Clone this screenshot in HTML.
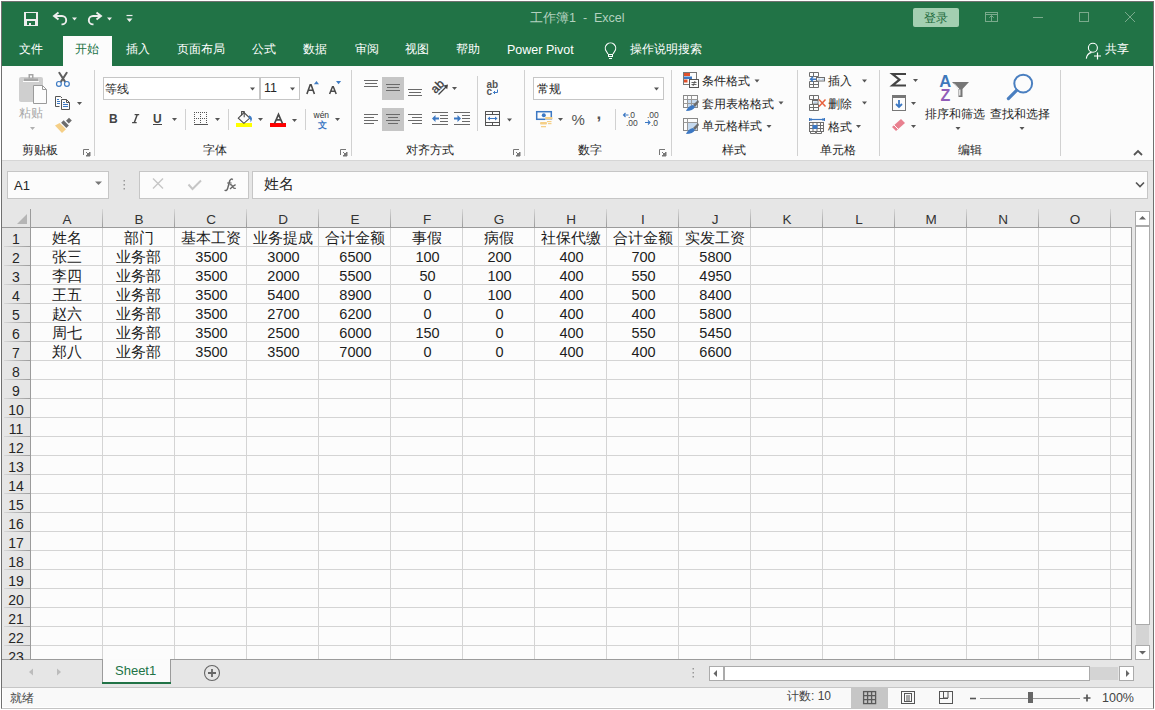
<!DOCTYPE html><html><head><meta charset="utf-8"><style>
*{margin:0;padding:0;box-sizing:border-box}
html,body{width:1155px;height:710px;overflow:hidden;background:#fff}
body{position:relative;font-family:"Liberation Sans",sans-serif}
.t{position:absolute;white-space:nowrap;line-height:1}
.a{position:absolute}
svg{position:absolute;left:0;top:0;overflow:visible}
</style></head><body><div class="a" style="left:1px;top:1px;width:1153px;height:708px;border:1px solid #707070;border-bottom-color:#c4c4c4"></div><div class="a" style="left:2px;top:2px;width:1151px;height:64px;background:#217346"></div><div class="a" style="left:63px;top:36px;width:49px;height:30px;background:#fcfcfc"></div><div class="a" style="left:2px;top:66px;width:1151px;height:94px;background:#fcfcfc"></div><div class="a" style="left:2px;top:160px;width:1151px;height:1px;background:#d6d6d6"></div><div class="a" style="left:2px;top:161px;width:1151px;height:499px;background:#e6e6e6"></div><div class="t" style="left:530px;top:12px;font-size:12.5px;color:#b3d1bf;">工作簿1&nbsp;&nbsp;-&nbsp;&nbsp;Excel</div><div class="t" style="left:19px;top:43px;font-size:12px;color:#ffffff;">文件</div><div class="t" style="left:75px;top:43px;font-size:12px;color:#217346;">开始</div><div class="t" style="left:126px;top:43px;font-size:12px;color:#ffffff;">插入</div><div class="t" style="left:177px;top:43px;font-size:12px;color:#ffffff;">页面布局</div><div class="t" style="left:252px;top:43px;font-size:12px;color:#ffffff;">公式</div><div class="t" style="left:303px;top:43px;font-size:12px;color:#ffffff;">数据</div><div class="t" style="left:355px;top:43px;font-size:12px;color:#ffffff;">审阅</div><div class="t" style="left:405px;top:43px;font-size:12px;color:#ffffff;">视图</div><div class="t" style="left:456px;top:43px;font-size:12px;color:#ffffff;">帮助</div><div class="t" style="left:507px;top:44px;font-size:12.5px;color:#ffffff;">Power Pivot</div><div class="t" style="left:630px;top:43px;font-size:12px;color:#ffffff;">操作说明搜索</div><div class="t" style="left:1105px;top:43px;font-size:12px;color:#ffffff;">共享</div><div class="a" style="left:913px;top:8px;width:46px;height:19px;background:#a3cfb1;border-radius:2px"></div><div class="t" style="left:924px;top:12px;font-size:12px;color:#1d6a3c;">登录</div><div class="a" style="left:94px;top:70px;width:1px;height:86px;background:#d1d1d1"></div><div class="a" style="left:351px;top:70px;width:1px;height:86px;background:#d1d1d1"></div><div class="a" style="left:524px;top:70px;width:1px;height:86px;background:#d1d1d1"></div><div class="a" style="left:671px;top:70px;width:1px;height:86px;background:#d1d1d1"></div><div class="a" style="left:797px;top:70px;width:1px;height:86px;background:#d1d1d1"></div><div class="a" style="left:879px;top:70px;width:1px;height:86px;background:#d1d1d1"></div><div class="a" style="left:1060px;top:70px;width:1px;height:86px;background:#d1d1d1"></div><div class="a" style="left:185px;top:109px;width:1px;height:21px;background:#d1d1d1"></div><div class="a" style="left:228px;top:109px;width:1px;height:21px;background:#d1d1d1"></div><div class="a" style="left:305px;top:109px;width:1px;height:21px;background:#d1d1d1"></div><div class="a" style="left:477px;top:76px;width:1px;height:55px;background:#d1d1d1"></div><div class="a" style="left:615px;top:109px;width:1px;height:21px;background:#d1d1d1"></div><div class="t" style="left:22px;top:144px;font-size:12px;color:#262626;">剪贴板</div><div class="t" style="left:203px;top:144px;font-size:12px;color:#262626;">字体</div><div class="t" style="left:406px;top:144px;font-size:12px;color:#262626;">对齐方式</div><div class="t" style="left:578px;top:144px;font-size:12px;color:#262626;">数字</div><div class="t" style="left:722px;top:144px;font-size:12px;color:#262626;">样式</div><div class="t" style="left:820px;top:144px;font-size:12px;color:#262626;">单元格</div><div class="t" style="left:958px;top:144px;font-size:12px;color:#262626;">编辑</div><div class="a" style="left:103px;top:77px;width:157px;height:23px;background:#fff;border:1px solid #c6c6c6"></div><div class="a" style="left:260px;top:77px;width:40px;height:23px;background:#fff;border:1px solid #c6c6c6"></div><div class="t" style="left:105px;top:83px;font-size:12px;color:#262626;">等线</div><div class="t" style="left:264px;top:82px;font-size:12.5px;color:#262626;">11</div><div class="a" style="left:533px;top:77px;width:131px;height:23px;background:#fff;border:1px solid #c6c6c6"></div><div class="t" style="left:537px;top:83px;font-size:12px;color:#262626;">常规</div><div class="a" style="left:382px;top:77px;width:22px;height:23px;background:#c6c6c6"></div><div class="a" style="left:382px;top:108px;width:22px;height:23px;background:#c6c6c6"></div><div class="t" style="left:702px;top:75px;font-size:12px;color:#262626;">条件格式</div><div class="t" style="left:702px;top:98px;font-size:12px;color:#262626;">套用表格格式</div><div class="t" style="left:702px;top:120px;font-size:12px;color:#262626;">单元格样式</div><div class="t" style="left:828px;top:75px;font-size:12px;color:#262626;">插入</div><div class="t" style="left:828px;top:98px;font-size:12px;color:#262626;">删除</div><div class="t" style="left:828px;top:121px;font-size:12px;color:#262626;">格式</div><div class="t" style="left:925px;top:108px;font-size:12px;color:#262626;">排序和筛选</div><div class="t" style="left:990px;top:108px;font-size:12px;color:#262626;">查找和选择</div><div class="t" style="left:19px;top:107px;font-size:12px;color:#a6a6a6;">粘贴</div><div class="a" style="left:7px;top:171px;width:102px;height:28px;background:#fcfcfc;border:1px solid #c6c6c6"></div><div class="t" style="left:14px;top:179px;font-size:13px;color:#262626;">A1</div><div class="a" style="left:139px;top:171px;width:110px;height:28px;background:#fcfcfc;border:1px solid #c6c6c6"></div><div class="a" style="left:252px;top:171px;width:896px;height:28px;background:#fcfcfc;border:1px solid #c6c6c6"></div><div class="t" style="left:264px;top:176px;font-size:15px;color:#262626;">姓名</div><div class="a" style="left:31px;top:228px;width:1100px;height:431px;background:#fcfcfc"></div><div class="a" style="left:102px;top:228px;width:1px;height:431px;background:#d4d4d4"></div><div class="a" style="left:102px;top:209px;width:1px;height:18px;background:linear-gradient(#d8d8d8,#bdbdbd 40%,#9d9d9d)"></div><div class="a" style="left:174px;top:228px;width:1px;height:431px;background:#d4d4d4"></div><div class="a" style="left:174px;top:209px;width:1px;height:18px;background:linear-gradient(#d8d8d8,#bdbdbd 40%,#9d9d9d)"></div><div class="a" style="left:246px;top:228px;width:1px;height:431px;background:#d4d4d4"></div><div class="a" style="left:246px;top:209px;width:1px;height:18px;background:linear-gradient(#d8d8d8,#bdbdbd 40%,#9d9d9d)"></div><div class="a" style="left:318px;top:228px;width:1px;height:431px;background:#d4d4d4"></div><div class="a" style="left:318px;top:209px;width:1px;height:18px;background:linear-gradient(#d8d8d8,#bdbdbd 40%,#9d9d9d)"></div><div class="a" style="left:390px;top:228px;width:1px;height:431px;background:#d4d4d4"></div><div class="a" style="left:390px;top:209px;width:1px;height:18px;background:linear-gradient(#d8d8d8,#bdbdbd 40%,#9d9d9d)"></div><div class="a" style="left:462px;top:228px;width:1px;height:431px;background:#d4d4d4"></div><div class="a" style="left:462px;top:209px;width:1px;height:18px;background:linear-gradient(#d8d8d8,#bdbdbd 40%,#9d9d9d)"></div><div class="a" style="left:534px;top:228px;width:1px;height:431px;background:#d4d4d4"></div><div class="a" style="left:534px;top:209px;width:1px;height:18px;background:linear-gradient(#d8d8d8,#bdbdbd 40%,#9d9d9d)"></div><div class="a" style="left:606px;top:228px;width:1px;height:431px;background:#d4d4d4"></div><div class="a" style="left:606px;top:209px;width:1px;height:18px;background:linear-gradient(#d8d8d8,#bdbdbd 40%,#9d9d9d)"></div><div class="a" style="left:678px;top:228px;width:1px;height:431px;background:#d4d4d4"></div><div class="a" style="left:678px;top:209px;width:1px;height:18px;background:linear-gradient(#d8d8d8,#bdbdbd 40%,#9d9d9d)"></div><div class="a" style="left:750px;top:228px;width:1px;height:431px;background:#d4d4d4"></div><div class="a" style="left:750px;top:209px;width:1px;height:18px;background:linear-gradient(#d8d8d8,#bdbdbd 40%,#9d9d9d)"></div><div class="a" style="left:822px;top:228px;width:1px;height:431px;background:#d4d4d4"></div><div class="a" style="left:822px;top:209px;width:1px;height:18px;background:linear-gradient(#d8d8d8,#bdbdbd 40%,#9d9d9d)"></div><div class="a" style="left:894px;top:228px;width:1px;height:431px;background:#d4d4d4"></div><div class="a" style="left:894px;top:209px;width:1px;height:18px;background:linear-gradient(#d8d8d8,#bdbdbd 40%,#9d9d9d)"></div><div class="a" style="left:966px;top:228px;width:1px;height:431px;background:#d4d4d4"></div><div class="a" style="left:966px;top:209px;width:1px;height:18px;background:linear-gradient(#d8d8d8,#bdbdbd 40%,#9d9d9d)"></div><div class="a" style="left:1038px;top:228px;width:1px;height:431px;background:#d4d4d4"></div><div class="a" style="left:1038px;top:209px;width:1px;height:18px;background:linear-gradient(#d8d8d8,#bdbdbd 40%,#9d9d9d)"></div><div class="a" style="left:1110px;top:228px;width:1px;height:431px;background:#d4d4d4"></div><div class="a" style="left:1110px;top:209px;width:1px;height:18px;background:linear-gradient(#d8d8d8,#bdbdbd 40%,#9d9d9d)"></div><div class="a" style="left:31px;top:246px;width:1100px;height:1px;background:#d4d4d4"></div><div class="a" style="left:4px;top:246px;width:26px;height:1px;background:linear-gradient(90deg,#d8d8d8,#bdbdbd 40%,#9d9d9d)"></div><div class="a" style="left:31px;top:265px;width:1100px;height:1px;background:#d4d4d4"></div><div class="a" style="left:4px;top:265px;width:26px;height:1px;background:linear-gradient(90deg,#d8d8d8,#bdbdbd 40%,#9d9d9d)"></div><div class="a" style="left:31px;top:284px;width:1100px;height:1px;background:#d4d4d4"></div><div class="a" style="left:4px;top:284px;width:26px;height:1px;background:linear-gradient(90deg,#d8d8d8,#bdbdbd 40%,#9d9d9d)"></div><div class="a" style="left:31px;top:303px;width:1100px;height:1px;background:#d4d4d4"></div><div class="a" style="left:4px;top:303px;width:26px;height:1px;background:linear-gradient(90deg,#d8d8d8,#bdbdbd 40%,#9d9d9d)"></div><div class="a" style="left:31px;top:322px;width:1100px;height:1px;background:#d4d4d4"></div><div class="a" style="left:4px;top:322px;width:26px;height:1px;background:linear-gradient(90deg,#d8d8d8,#bdbdbd 40%,#9d9d9d)"></div><div class="a" style="left:31px;top:341px;width:1100px;height:1px;background:#d4d4d4"></div><div class="a" style="left:4px;top:341px;width:26px;height:1px;background:linear-gradient(90deg,#d8d8d8,#bdbdbd 40%,#9d9d9d)"></div><div class="a" style="left:31px;top:360px;width:1100px;height:1px;background:#d4d4d4"></div><div class="a" style="left:4px;top:360px;width:26px;height:1px;background:linear-gradient(90deg,#d8d8d8,#bdbdbd 40%,#9d9d9d)"></div><div class="a" style="left:31px;top:379px;width:1100px;height:1px;background:#d4d4d4"></div><div class="a" style="left:4px;top:379px;width:26px;height:1px;background:linear-gradient(90deg,#d8d8d8,#bdbdbd 40%,#9d9d9d)"></div><div class="a" style="left:31px;top:398px;width:1100px;height:1px;background:#d4d4d4"></div><div class="a" style="left:4px;top:398px;width:26px;height:1px;background:linear-gradient(90deg,#d8d8d8,#bdbdbd 40%,#9d9d9d)"></div><div class="a" style="left:31px;top:417px;width:1100px;height:1px;background:#d4d4d4"></div><div class="a" style="left:4px;top:417px;width:26px;height:1px;background:linear-gradient(90deg,#d8d8d8,#bdbdbd 40%,#9d9d9d)"></div><div class="a" style="left:31px;top:436px;width:1100px;height:1px;background:#d4d4d4"></div><div class="a" style="left:4px;top:436px;width:26px;height:1px;background:linear-gradient(90deg,#d8d8d8,#bdbdbd 40%,#9d9d9d)"></div><div class="a" style="left:31px;top:455px;width:1100px;height:1px;background:#d4d4d4"></div><div class="a" style="left:4px;top:455px;width:26px;height:1px;background:linear-gradient(90deg,#d8d8d8,#bdbdbd 40%,#9d9d9d)"></div><div class="a" style="left:31px;top:474px;width:1100px;height:1px;background:#d4d4d4"></div><div class="a" style="left:4px;top:474px;width:26px;height:1px;background:linear-gradient(90deg,#d8d8d8,#bdbdbd 40%,#9d9d9d)"></div><div class="a" style="left:31px;top:493px;width:1100px;height:1px;background:#d4d4d4"></div><div class="a" style="left:4px;top:493px;width:26px;height:1px;background:linear-gradient(90deg,#d8d8d8,#bdbdbd 40%,#9d9d9d)"></div><div class="a" style="left:31px;top:512px;width:1100px;height:1px;background:#d4d4d4"></div><div class="a" style="left:4px;top:512px;width:26px;height:1px;background:linear-gradient(90deg,#d8d8d8,#bdbdbd 40%,#9d9d9d)"></div><div class="a" style="left:31px;top:531px;width:1100px;height:1px;background:#d4d4d4"></div><div class="a" style="left:4px;top:531px;width:26px;height:1px;background:linear-gradient(90deg,#d8d8d8,#bdbdbd 40%,#9d9d9d)"></div><div class="a" style="left:31px;top:550px;width:1100px;height:1px;background:#d4d4d4"></div><div class="a" style="left:4px;top:550px;width:26px;height:1px;background:linear-gradient(90deg,#d8d8d8,#bdbdbd 40%,#9d9d9d)"></div><div class="a" style="left:31px;top:569px;width:1100px;height:1px;background:#d4d4d4"></div><div class="a" style="left:4px;top:569px;width:26px;height:1px;background:linear-gradient(90deg,#d8d8d8,#bdbdbd 40%,#9d9d9d)"></div><div class="a" style="left:31px;top:588px;width:1100px;height:1px;background:#d4d4d4"></div><div class="a" style="left:4px;top:588px;width:26px;height:1px;background:linear-gradient(90deg,#d8d8d8,#bdbdbd 40%,#9d9d9d)"></div><div class="a" style="left:31px;top:607px;width:1100px;height:1px;background:#d4d4d4"></div><div class="a" style="left:4px;top:607px;width:26px;height:1px;background:linear-gradient(90deg,#d8d8d8,#bdbdbd 40%,#9d9d9d)"></div><div class="a" style="left:31px;top:626px;width:1100px;height:1px;background:#d4d4d4"></div><div class="a" style="left:4px;top:626px;width:26px;height:1px;background:linear-gradient(90deg,#d8d8d8,#bdbdbd 40%,#9d9d9d)"></div><div class="a" style="left:31px;top:645px;width:1100px;height:1px;background:#d4d4d4"></div><div class="a" style="left:4px;top:645px;width:26px;height:1px;background:linear-gradient(90deg,#d8d8d8,#bdbdbd 40%,#9d9d9d)"></div><div class="a" style="left:2px;top:227px;width:1130px;height:1px;background:#9b9b9b"></div><div class="a" style="left:30px;top:209px;width:1px;height:451px;background:#9b9b9b"></div><div class="a" style="left:1131px;top:227px;width:1px;height:433px;background:#9b9b9b"></div><div class="a" style="left:2px;top:659px;width:1130px;height:1px;background:#9b9b9b"></div><div class="t" style="left:31px;top:212.5px;width:72px;text-align:center;font-size:13.5px;color:#333">A</div><div class="t" style="left:103px;top:212.5px;width:72px;text-align:center;font-size:13.5px;color:#333">B</div><div class="t" style="left:175px;top:212.5px;width:72px;text-align:center;font-size:13.5px;color:#333">C</div><div class="t" style="left:247px;top:212.5px;width:72px;text-align:center;font-size:13.5px;color:#333">D</div><div class="t" style="left:319px;top:212.5px;width:72px;text-align:center;font-size:13.5px;color:#333">E</div><div class="t" style="left:391px;top:212.5px;width:72px;text-align:center;font-size:13.5px;color:#333">F</div><div class="t" style="left:463px;top:212.5px;width:72px;text-align:center;font-size:13.5px;color:#333">G</div><div class="t" style="left:535px;top:212.5px;width:72px;text-align:center;font-size:13.5px;color:#333">H</div><div class="t" style="left:607px;top:212.5px;width:72px;text-align:center;font-size:13.5px;color:#333">I</div><div class="t" style="left:679px;top:212.5px;width:72px;text-align:center;font-size:13.5px;color:#333">J</div><div class="t" style="left:751px;top:212.5px;width:72px;text-align:center;font-size:13.5px;color:#333">K</div><div class="t" style="left:823px;top:212.5px;width:72px;text-align:center;font-size:13.5px;color:#333">L</div><div class="t" style="left:895px;top:212.5px;width:72px;text-align:center;font-size:13.5px;color:#333">M</div><div class="t" style="left:967px;top:212.5px;width:72px;text-align:center;font-size:13.5px;color:#333">N</div><div class="t" style="left:1039px;top:212.5px;width:72px;text-align:center;font-size:13.5px;color:#333">O</div><div class="t" style="left:2px;top:232px;width:28px;text-align:center;font-size:14px;color:#262626">1</div><div class="t" style="left:2px;top:251px;width:28px;text-align:center;font-size:14px;color:#262626">2</div><div class="t" style="left:2px;top:270px;width:28px;text-align:center;font-size:14px;color:#262626">3</div><div class="t" style="left:2px;top:289px;width:28px;text-align:center;font-size:14px;color:#262626">4</div><div class="t" style="left:2px;top:308px;width:28px;text-align:center;font-size:14px;color:#262626">5</div><div class="t" style="left:2px;top:327px;width:28px;text-align:center;font-size:14px;color:#262626">6</div><div class="t" style="left:2px;top:346px;width:28px;text-align:center;font-size:14px;color:#262626">7</div><div class="t" style="left:2px;top:365px;width:28px;text-align:center;font-size:14px;color:#262626">8</div><div class="t" style="left:2px;top:384px;width:28px;text-align:center;font-size:14px;color:#262626">9</div><div class="t" style="left:2px;top:403px;width:28px;text-align:center;font-size:14px;color:#262626">10</div><div class="t" style="left:2px;top:422px;width:28px;text-align:center;font-size:14px;color:#262626">11</div><div class="t" style="left:2px;top:441px;width:28px;text-align:center;font-size:14px;color:#262626">12</div><div class="t" style="left:2px;top:460px;width:28px;text-align:center;font-size:14px;color:#262626">13</div><div class="t" style="left:2px;top:479px;width:28px;text-align:center;font-size:14px;color:#262626">14</div><div class="t" style="left:2px;top:498px;width:28px;text-align:center;font-size:14px;color:#262626">15</div><div class="t" style="left:2px;top:517px;width:28px;text-align:center;font-size:14px;color:#262626">16</div><div class="t" style="left:2px;top:536px;width:28px;text-align:center;font-size:14px;color:#262626">17</div><div class="t" style="left:2px;top:555px;width:28px;text-align:center;font-size:14px;color:#262626">18</div><div class="t" style="left:2px;top:574px;width:28px;text-align:center;font-size:14px;color:#262626">19</div><div class="t" style="left:2px;top:593px;width:28px;text-align:center;font-size:14px;color:#262626">20</div><div class="t" style="left:2px;top:612px;width:28px;text-align:center;font-size:14px;color:#262626">21</div><div class="t" style="left:2px;top:631px;width:28px;text-align:center;font-size:14px;color:#262626">22</div><div class="t" style="left:2px;top:650px;width:28px;text-align:center;font-size:14px;color:#262626">23</div><div class="t" style="left:31px;top:231px;width:71px;text-align:center;font-size:14.5px;color:#1c1c1c">姓名</div><div class="t" style="left:103px;top:231px;width:71px;text-align:center;font-size:14.5px;color:#1c1c1c">部门</div><div class="t" style="left:175px;top:231px;width:71px;text-align:center;font-size:14.5px;color:#1c1c1c">基本工资</div><div class="t" style="left:247px;top:231px;width:71px;text-align:center;font-size:14.5px;color:#1c1c1c">业务提成</div><div class="t" style="left:319px;top:231px;width:71px;text-align:center;font-size:14.5px;color:#1c1c1c">合计金额</div><div class="t" style="left:391px;top:231px;width:71px;text-align:center;font-size:14.5px;color:#1c1c1c">事假</div><div class="t" style="left:463px;top:231px;width:71px;text-align:center;font-size:14.5px;color:#1c1c1c">病假</div><div class="t" style="left:535px;top:231px;width:71px;text-align:center;font-size:14.5px;color:#1c1c1c">社保代缴</div><div class="t" style="left:607px;top:231px;width:71px;text-align:center;font-size:14.5px;color:#1c1c1c">合计金额</div><div class="t" style="left:679px;top:231px;width:71px;text-align:center;font-size:14.5px;color:#1c1c1c">实发工资</div><div class="t" style="left:31px;top:250px;width:71px;text-align:center;font-size:14.5px;color:#1c1c1c">张三</div><div class="t" style="left:103px;top:250px;width:71px;text-align:center;font-size:14.5px;color:#1c1c1c">业务部</div><div class="t" style="left:176px;top:250px;width:71px;text-align:center;font-size:14.5px;color:#1c1c1c">3500</div><div class="t" style="left:248px;top:250px;width:71px;text-align:center;font-size:14.5px;color:#1c1c1c">3000</div><div class="t" style="left:320px;top:250px;width:71px;text-align:center;font-size:14.5px;color:#1c1c1c">6500</div><div class="t" style="left:392px;top:250px;width:71px;text-align:center;font-size:14.5px;color:#1c1c1c">100</div><div class="t" style="left:464px;top:250px;width:71px;text-align:center;font-size:14.5px;color:#1c1c1c">200</div><div class="t" style="left:536px;top:250px;width:71px;text-align:center;font-size:14.5px;color:#1c1c1c">400</div><div class="t" style="left:608px;top:250px;width:71px;text-align:center;font-size:14.5px;color:#1c1c1c">700</div><div class="t" style="left:680px;top:250px;width:71px;text-align:center;font-size:14.5px;color:#1c1c1c">5800</div><div class="t" style="left:31px;top:269px;width:71px;text-align:center;font-size:14.5px;color:#1c1c1c">李四</div><div class="t" style="left:103px;top:269px;width:71px;text-align:center;font-size:14.5px;color:#1c1c1c">业务部</div><div class="t" style="left:176px;top:269px;width:71px;text-align:center;font-size:14.5px;color:#1c1c1c">3500</div><div class="t" style="left:248px;top:269px;width:71px;text-align:center;font-size:14.5px;color:#1c1c1c">2000</div><div class="t" style="left:320px;top:269px;width:71px;text-align:center;font-size:14.5px;color:#1c1c1c">5500</div><div class="t" style="left:392px;top:269px;width:71px;text-align:center;font-size:14.5px;color:#1c1c1c">50</div><div class="t" style="left:464px;top:269px;width:71px;text-align:center;font-size:14.5px;color:#1c1c1c">100</div><div class="t" style="left:536px;top:269px;width:71px;text-align:center;font-size:14.5px;color:#1c1c1c">400</div><div class="t" style="left:608px;top:269px;width:71px;text-align:center;font-size:14.5px;color:#1c1c1c">550</div><div class="t" style="left:680px;top:269px;width:71px;text-align:center;font-size:14.5px;color:#1c1c1c">4950</div><div class="t" style="left:31px;top:288px;width:71px;text-align:center;font-size:14.5px;color:#1c1c1c">王五</div><div class="t" style="left:103px;top:288px;width:71px;text-align:center;font-size:14.5px;color:#1c1c1c">业务部</div><div class="t" style="left:176px;top:288px;width:71px;text-align:center;font-size:14.5px;color:#1c1c1c">3500</div><div class="t" style="left:248px;top:288px;width:71px;text-align:center;font-size:14.5px;color:#1c1c1c">5400</div><div class="t" style="left:320px;top:288px;width:71px;text-align:center;font-size:14.5px;color:#1c1c1c">8900</div><div class="t" style="left:392px;top:288px;width:71px;text-align:center;font-size:14.5px;color:#1c1c1c">0</div><div class="t" style="left:464px;top:288px;width:71px;text-align:center;font-size:14.5px;color:#1c1c1c">100</div><div class="t" style="left:536px;top:288px;width:71px;text-align:center;font-size:14.5px;color:#1c1c1c">400</div><div class="t" style="left:608px;top:288px;width:71px;text-align:center;font-size:14.5px;color:#1c1c1c">500</div><div class="t" style="left:680px;top:288px;width:71px;text-align:center;font-size:14.5px;color:#1c1c1c">8400</div><div class="t" style="left:31px;top:307px;width:71px;text-align:center;font-size:14.5px;color:#1c1c1c">赵六</div><div class="t" style="left:103px;top:307px;width:71px;text-align:center;font-size:14.5px;color:#1c1c1c">业务部</div><div class="t" style="left:176px;top:307px;width:71px;text-align:center;font-size:14.5px;color:#1c1c1c">3500</div><div class="t" style="left:248px;top:307px;width:71px;text-align:center;font-size:14.5px;color:#1c1c1c">2700</div><div class="t" style="left:320px;top:307px;width:71px;text-align:center;font-size:14.5px;color:#1c1c1c">6200</div><div class="t" style="left:392px;top:307px;width:71px;text-align:center;font-size:14.5px;color:#1c1c1c">0</div><div class="t" style="left:464px;top:307px;width:71px;text-align:center;font-size:14.5px;color:#1c1c1c">0</div><div class="t" style="left:536px;top:307px;width:71px;text-align:center;font-size:14.5px;color:#1c1c1c">400</div><div class="t" style="left:608px;top:307px;width:71px;text-align:center;font-size:14.5px;color:#1c1c1c">400</div><div class="t" style="left:680px;top:307px;width:71px;text-align:center;font-size:14.5px;color:#1c1c1c">5800</div><div class="t" style="left:31px;top:326px;width:71px;text-align:center;font-size:14.5px;color:#1c1c1c">周七</div><div class="t" style="left:103px;top:326px;width:71px;text-align:center;font-size:14.5px;color:#1c1c1c">业务部</div><div class="t" style="left:176px;top:326px;width:71px;text-align:center;font-size:14.5px;color:#1c1c1c">3500</div><div class="t" style="left:248px;top:326px;width:71px;text-align:center;font-size:14.5px;color:#1c1c1c">2500</div><div class="t" style="left:320px;top:326px;width:71px;text-align:center;font-size:14.5px;color:#1c1c1c">6000</div><div class="t" style="left:392px;top:326px;width:71px;text-align:center;font-size:14.5px;color:#1c1c1c">150</div><div class="t" style="left:464px;top:326px;width:71px;text-align:center;font-size:14.5px;color:#1c1c1c">0</div><div class="t" style="left:536px;top:326px;width:71px;text-align:center;font-size:14.5px;color:#1c1c1c">400</div><div class="t" style="left:608px;top:326px;width:71px;text-align:center;font-size:14.5px;color:#1c1c1c">550</div><div class="t" style="left:680px;top:326px;width:71px;text-align:center;font-size:14.5px;color:#1c1c1c">5450</div><div class="t" style="left:31px;top:345px;width:71px;text-align:center;font-size:14.5px;color:#1c1c1c">郑八</div><div class="t" style="left:103px;top:345px;width:71px;text-align:center;font-size:14.5px;color:#1c1c1c">业务部</div><div class="t" style="left:176px;top:345px;width:71px;text-align:center;font-size:14.5px;color:#1c1c1c">3500</div><div class="t" style="left:248px;top:345px;width:71px;text-align:center;font-size:14.5px;color:#1c1c1c">3500</div><div class="t" style="left:320px;top:345px;width:71px;text-align:center;font-size:14.5px;color:#1c1c1c">7000</div><div class="t" style="left:392px;top:345px;width:71px;text-align:center;font-size:14.5px;color:#1c1c1c">0</div><div class="t" style="left:464px;top:345px;width:71px;text-align:center;font-size:14.5px;color:#1c1c1c">0</div><div class="t" style="left:536px;top:345px;width:71px;text-align:center;font-size:14.5px;color:#1c1c1c">400</div><div class="t" style="left:608px;top:345px;width:71px;text-align:center;font-size:14.5px;color:#1c1c1c">400</div><div class="t" style="left:680px;top:345px;width:71px;text-align:center;font-size:14.5px;color:#1c1c1c">6600</div><div class="a" style="left:1135px;top:211px;width:15px;height:15px;background:#fff;border:1px solid #ababab"></div><div class="a" style="left:1135px;top:226px;width:15px;height:399px;background:#fff;border:1px solid #ababab"></div><div class="a" style="left:1136px;top:625px;width:13px;height:20px;background:#d4d4d4"></div><div class="a" style="left:1135px;top:645px;width:15px;height:15px;background:#fff;border:1px solid #ababab"></div><div class="a" style="left:2px;top:660px;width:1151px;height:27px;background:#e6e6e6"></div><div class="a" style="left:102px;top:659px;width:69px;height:25px;background:#fbfbfb;border:1px solid #9b9b9b;border-top:none"></div><div class="a" style="left:103px;top:659px;width:67px;height:1px;background:#fbfbfb"></div><div class="a" style="left:102px;top:682px;width:69px;height:2px;background:#217346"></div><div class="t" style="left:115px;top:664px;font-size:13px;color:#217346;">Sheet1</div><div class="a" style="left:709px;top:666px;width:15px;height:15px;background:#fff;border:1px solid #ababab"></div><div class="a" style="left:724px;top:666px;width:366px;height:15px;background:#fff;border:1px solid #ababab"></div><div class="a" style="left:1090px;top:667px;width:28px;height:13px;background:#d4d4d4"></div><div class="a" style="left:1119px;top:666px;width:15px;height:15px;background:#fff;border:1px solid #ababab"></div><div class="a" style="left:2px;top:687px;width:1151px;height:1px;background:#c6c6c6"></div><div class="a" style="left:2px;top:688px;width:1151px;height:20px;background:#fff"></div><div class="a" style="left:3px;top:688px;width:1150px;height:19px;background:#f9f9f9"></div><div class="a" style="left:851px;top:688px;width:37px;height:20px;background:#c6c6c6"></div><div class="t" style="left:10px;top:691.5px;font-size:12px;color:#444;">就绪</div><div class="t" style="left:787px;top:690px;font-size:12px;color:#444;">计数: 10</div><div class="t" style="left:1102px;top:692px;font-size:12.5px;color:#444;">100%</div><div class="a" style="left:236px;top:123px;width:16px;height:4px;background:#ffff00"></div><div class="a" style="left:270px;top:123px;width:16px;height:4px;background:#ff0000"></div><svg width="1155" height="710"><path d="M24 12h14v14h-14zM26 13v6h10v-6zM27 21v4h2v-2h2v2h4v-4z" fill="#eeeeee" fill-rule="evenodd"/><path d="M58.5 12.5L54 16l4.5 3.5M55 16h7A4.2 4.2 0 0 1 62 24.4h-0.5" fill="none" stroke="#eeeeee" stroke-width="1.9"/><path d="M72 17.5h5l-2.5 3.0z" fill="#eeeeee"/><path d="M96.5 12.5L101 16l-4.5 3.5M100 16h-7A4.2 4.2 0 0 0 93 24.4h0.5" fill="none" stroke="#eeeeee" stroke-width="1.9"/><path d="M107 17.5h5l-2.5 3.0z" fill="#eeeeee"/><path d="M126.5 15.5h6" stroke="#eeeeee" stroke-width="1.2"/><path d="M126.5 18.5h6l-3.0 3.5999999999999996z" fill="#eeeeee"/><rect x="985.5" y="12.5" width="12" height="9" fill="none" stroke="#7aaa8c"/><path d="M985.5 14.5h12M991.5 21.5v-6M989.3 17.7l2.2-2.2 2.2 2.2" stroke="#7aaa8c" fill="none"/><path d="M1033 17.5h10" stroke="#7aaa8c"/><rect x="1079.5" y="12.5" width="9" height="9" fill="none" stroke="#7aaa8c"/><path d="M1125 12l10 10M1135 12l-10 10" stroke="#7aaa8c"/><path d="M608 54 L606.3 51.2 A5.2 5.2 0 1 1 614.7 51.2 L613 54" fill="none" stroke="#fff" stroke-width="1.1"/><rect x="608.5" y="54.5" width="4" height="2" fill="none" stroke="#fff"/><path d="M609 58.5h3" stroke="#fff"/><circle cx="1092.9" cy="47.8" r="4.5" fill="none" stroke="#fff" stroke-width="1.1"/><path d="M1086.3 58.6 Q1087 53.5 1091.6 52.4" fill="none" stroke="#fff" stroke-width="1.1"/><path d="M1097.5 52.5v7M1094 56h7" stroke="#fff" stroke-width="1.2"/><rect x="19" y="77" width="24" height="25" rx="2" fill="#cfcfcf"/><path d="M24 78.5h14v2.5h-14z" fill="#a6a6a6"/><path d="M28.5 74h5v4.5h-5z" fill="#a6a6a6"/><path d="M30 75.5h2v2h-2z" fill="#fcfcfc"/><path d="M23 81.5h16" stroke="#fcfcfc"/><path d="M33.5 85.5h9l4 4v14h-13z" fill="#fcfcfc" stroke="#9a9a9a"/><path d="M42.5 85.5v4h4" fill="none" stroke="#9a9a9a"/><path d="M30 127h5l-2.5 3.0z" fill="#b0b0b0"/><path d="M59.3 72.8 L65 81.6M66.7 72.8 L61 81.6" stroke="#5e5e5e" stroke-width="2" stroke-linecap="round"/><circle cx="58.9" cy="83.9" r="2.4" fill="#fcfcfc" stroke="#3f7cc4" stroke-width="1.2"/><circle cx="66.9" cy="83.9" r="2.4" fill="#fcfcfc" stroke="#3f7cc4" stroke-width="1.2"/><path d="M59.5 106.5h-4v-10h5l1.5 1.5" fill="none" stroke="#555"/><path d="M61.5 99.5h5l3 3v7h-8z" fill="#fcfcfc" stroke="#555"/><path d="M66.5 99.5v3h3" fill="none" stroke="#555"/><path d="M57 99.5h2M57 101.5h3M57 103.5h3M63 102.5h2M63 104.5h5M63 106.5h5" stroke="#3c78c3"/><path d="M77 102h5l-2.5 3.0z" fill="#555"/><path d="M55 125.5 L59.7 123 L66 129.2 L62 133Z" fill="#f5cf87"/><path d="M61.1 122.8 L63.6 120.3 L68.9 125.6 L66.4 128.1Z" fill="#6d6d6d"/><path d="M66 120.8 L69 117.8 L71.8 120.6 L68.8 123.6Z" fill="#6d6d6d"/><path d="M83.5 155v-5.5h5.5" fill="none" stroke="#777"/><path d="M86 152l3.5 3.5M90 152v4h-4z" stroke="#777" fill="#777" stroke-width="1"/><path d="M340.5 155v-5.5h5.5" fill="none" stroke="#777"/><path d="M343 152l3.5 3.5M347 152v4h-4z" stroke="#777" fill="#777" stroke-width="1"/><path d="M513.5 155v-5.5h5.5" fill="none" stroke="#777"/><path d="M516 152l3.5 3.5M520 152v4h-4z" stroke="#777" fill="#777" stroke-width="1"/><path d="M659.5 155v-5.5h5.5" fill="none" stroke="#777"/><path d="M662 152l3.5 3.5M666 152v4h-4z" stroke="#777" fill="#777" stroke-width="1"/><path d="M250 87.5h5l-2.5 3.0z" fill="#555"/><path d="M290 87.5h5l-2.5 3.0z" fill="#555"/><path d="M654 87.5h5l-2.5 3.0z" fill="#555"/><path d="M306.9 94 L310.2 84.8h0.9 L314.4 94M308.4 90.3h4.5" fill="none" stroke="#4a4a4a" stroke-width="1.6"/><path d="M313.9 84.2l2.55-3.3 2.55 3.3z" fill="#3f7cc4"/><path d="M329.6 94 L332.5 86.7h0.8 L336.2 94M330.9 91.2h3.9" fill="none" stroke="#4a4a4a" stroke-width="1.5"/><path d="M336 80.9h5.1l-2.55 3.3z" fill="#3f7cc4"/><text x="109" y="123" font-family="Liberation Sans" font-weight="bold" font-size="12" fill="#444">B</text><path d="M134.6 114.6h4.6M132.1 122.6h4.6M137.3 114.6L134.3 122.6" fill="none" stroke="#474747" stroke-width="1.45"/><text x="153" y="123" font-family="Liberation Sans" font-weight="bold" font-size="12" fill="#444">U</text><path d="M153 124.5h9" stroke="#444"/><path d="M172 118h5l-2.5 3.0z" fill="#555"/><g fill="#555"><rect x="194" y="112" width="1" height="1"/><rect x="194" y="114" width="1" height="1"/><rect x="194" y="116" width="1" height="1"/><rect x="194" y="118" width="1" height="1"/><rect x="194" y="120" width="1" height="1"/><rect x="194" y="122" width="1" height="1"/><rect x="196" y="112" width="1" height="1"/><rect x="196" y="118" width="1" height="1"/><rect x="198" y="112" width="1" height="1"/><rect x="198" y="118" width="1" height="1"/><rect x="200" y="112" width="1" height="1"/><rect x="200" y="114" width="1" height="1"/><rect x="200" y="116" width="1" height="1"/><rect x="200" y="118" width="1" height="1"/><rect x="200" y="120" width="1" height="1"/><rect x="200" y="122" width="1" height="1"/><rect x="202" y="112" width="1" height="1"/><rect x="202" y="118" width="1" height="1"/><rect x="204" y="112" width="1" height="1"/><rect x="204" y="118" width="1" height="1"/><rect x="206" y="112" width="1" height="1"/><rect x="206" y="114" width="1" height="1"/><rect x="206" y="116" width="1" height="1"/><rect x="206" y="118" width="1" height="1"/><rect x="206" y="120" width="1" height="1"/><rect x="206" y="122" width="1" height="1"/></g><path d="M194 124.5h14" stroke="#555"/><path d="M215 118h5l-2.5 3.0z" fill="#555"/><path d="M238.3 118.2 L244 112.6 L249.8 118.1 L243.9 123.4Z" fill="none" stroke="#4a4a4a" stroke-width="1.05"/><path d="M241.6 115.6V111.6h2.6v5.6" fill="none" stroke="#4a4a4a" stroke-width="1.05"/><path d="M249.2 115.2 Q254 117.6 250.6 122.6 Q250.8 119.4 248.8 117.8Z" fill="#3f7cc4"/><path d="M258 118h5l-2.5 3.0z" fill="#555"/><path d="M274.5 123.5 L278.5 114.4 L282.5 123.5M276.2 119.8h4.6" fill="none" stroke="#4a4a4a" stroke-width="1.7"/><path d="M292 119h5l-2.5 3.0z" fill="#555"/><text x="313.5" y="118" font-family="Liberation Sans" font-size="8.5" fill="#333">wén</text><text x="317.5" y="127.5" font-family="Liberation Sans" font-weight="bold" font-size="9" fill="#3c78c3">文</text><path d="M335 118h5l-2.5 3.0z" fill="#555"/><path d="M364 80.5h14" stroke="#6a6a6a"/><path d="M365 83.5h12" stroke="#6a6a6a"/><path d="M364 86.5h14" stroke="#6a6a6a"/><path d="M386 84.5h14" stroke="#6a6a6a"/><path d="M387 87.5h12" stroke="#6a6a6a"/><path d="M386 90.5h14" stroke="#6a6a6a"/><path d="M408 89.5h14" stroke="#6a6a6a"/><path d="M409 92.5h12" stroke="#6a6a6a"/><path d="M408 95.5h14" stroke="#6a6a6a"/><path d="M364 114.5h14" stroke="#6a6a6a"/><path d="M386 114.5h14" stroke="#6a6a6a"/><path d="M408 114.5h14" stroke="#6a6a6a"/><path d="M364 117.5h10" stroke="#6a6a6a"/><path d="M388 117.5h10" stroke="#6a6a6a"/><path d="M412 117.5h10" stroke="#6a6a6a"/><path d="M364 120.5h14" stroke="#6a6a6a"/><path d="M386 120.5h14" stroke="#6a6a6a"/><path d="M408 120.5h14" stroke="#6a6a6a"/><path d="M364 123.5h10" stroke="#6a6a6a"/><path d="M388 123.5h10" stroke="#6a6a6a"/><path d="M412 123.5h10" stroke="#6a6a6a"/><text x="0" y="0" font-family="Liberation Sans" font-size="12" fill="#3a3a3a" stroke="#3a3a3a" stroke-width="0.35" transform="translate(435.5 94) rotate(-45)">ab</text><path d="M438.5 94.5 L446.5 86.5" stroke="#444" stroke-width="1.2"/><path d="M448 84.6 l-4.6 0.8 l3.8 3.8z" fill="#444"/><path d="M452 87h5l-2.5 3.0z" fill="#555"/><path d="M432 112.5h16" stroke="#6a6a6a"/><path d="M432 124.5h16" stroke="#6a6a6a"/><path d="M440 115.5h8" stroke="#6a6a6a"/><path d="M440 118.5h8" stroke="#6a6a6a"/><path d="M440 121.5h8" stroke="#6a6a6a"/><path d="M432 118.5 l3.5-3.5v2.5h3.5v2h-3.5v2.5z" fill="#3c78c3"/><path d="M454 112.5h16" stroke="#6a6a6a"/><path d="M454 124.5h16" stroke="#6a6a6a"/><path d="M462 115.5h8" stroke="#6a6a6a"/><path d="M462 118.5h8" stroke="#6a6a6a"/><path d="M462 121.5h8" stroke="#6a6a6a"/><path d="M461 118.5 l-3.5-3.5v2.5h-3.5v2h3.5v2.5z" fill="#3c78c3"/><text x="486.5" y="87.5" font-family="Liberation Sans" font-weight="bold" font-size="10" fill="#555">ab</text><text x="486.5" y="95" font-family="Liberation Sans" font-weight="bold" font-size="10" fill="#555">c</text><path d="M497.5 89.5v3h-4M495 91l-1.5 1.5 1.5 1.5" fill="none" stroke="#3c78c3"/><rect x="485.5" y="111.5" width="14" height="14" fill="none" stroke="#555"/><path d="M485.5 114.5h14M485.5 122.5h14M492.5 111.5v3M492.5 122.5v3" stroke="#555"/><path d="M488 118.5h9" stroke="#3c78c3"/><path d="M487.5 118.5l2.5-2v4zM497.5 118.5l-2.5-2v4z" fill="#3c78c3"/><path d="M507 118.5h5l-2.5 3.0z" fill="#555"/><rect x="536.7" y="111.7" width="14.6" height="7.6" fill="none" stroke="#3c78c3" stroke-width="1.5"/><circle cx="543.8" cy="115.3" r="2" fill="#3c78c3"/><g fill="#f5cf87"><rect x="545" y="117" width="7.5" height="2.6" rx="1"/><rect x="547" y="121" width="4.5" height="1.2"/><rect x="548" y="123" width="3.5" height="1.2"/><rect x="540" y="122" width="7" height="2.6" rx="1"/><rect x="541" y="126" width="5" height="1.3"/></g><rect x="545" y="119.6" width="7.5" height="1.4" fill="#fcfcfc"/><path d="M558 118h5l-2.5 3.0z" fill="#555"/><text x="571.5" y="124.5" font-family="Liberation Sans" font-size="15" fill="#555">%</text><text x="596.5" y="118.5" font-family="Liberation Sans" font-weight="bold" font-size="17" fill="#555">,</text><text x="628" y="118" font-family="Liberation Sans" font-size="8.5" fill="#444">.0</text><text x="626" y="125.5" font-family="Liberation Sans" font-size="8.5" fill="#444">.00</text><path d="M623.5 115h5M625.5 113l-2 2 2 2" fill="none" stroke="#3c78c3" stroke-width="1.1"/><text x="647" y="118" font-family="Liberation Sans" font-size="8.5" fill="#444">.00</text><text x="651" y="125.5" font-family="Liberation Sans" font-size="8.5" fill="#444">.0</text><path d="M645 122.5h5M648 120.5l2 2-2 2" fill="none" stroke="#3c78c3" stroke-width="1.1"/><rect x="683.5" y="72.5" width="13" height="12" fill="#fcfcfc" stroke="#777"/><rect x="684" y="73" width="6" height="3" fill="#e0502a"/><rect x="684" y="76.5" width="8" height="2.5" fill="#3c78c3"/><rect x="684" y="79.5" width="3.5" height="3" fill="#e0502a"/><rect x="689.5" y="79.5" width="9" height="8" fill="#fcfcfc" stroke="#555"/><path d="M691.5 82.5h5M691.5 84.5h5M695 81l-2 5" stroke="#555" stroke-width="0.9"/><rect x="683.5" y="95.5" width="14" height="12" fill="#fcfcfc" stroke="#888"/><rect x="687" y="99" width="10" height="8" fill="#c5d9ee"/><path d="M683.5 99.5h14M683.5 103.5h14M687.5 95.5v12M691.5 95.5v12" stroke="#999"/><path d="M693 105 L698 100 L699 102 L695 107z" fill="#6d6d6d"/><path d="M686 111 Q688 106 693 105 L695 107 Q693 111 686 111z" fill="#3c78c3"/><rect x="683.5" y="118.5" width="14" height="12" fill="#fcfcfc" stroke="#888"/><rect x="687" y="122" width="10" height="8" fill="#c5d9ee"/><path d="M683.5 122.5h14M687.5 118.5v12" stroke="#999"/><path d="M693 128 L698 123 L699 125 L695 130z" fill="#6d6d6d"/><path d="M686 134 Q688 129 693 128 L695 130 Q693 134 686 134z" fill="#3c78c3"/><path d="M754.5 79.5h5l-2.5 3.0z" fill="#555"/><path d="M778.5 101.5h5l-2.5 3.0z" fill="#555"/><path d="M766.5 125h5l-2.5 3.0z" fill="#555"/><g fill="none" stroke="#6e6e6e"><path d="M809.5 72.5h9v4h-9zM813.5 72.5v4"/><path d="M809.5 81.5h9v6h-9zM809.5 84.5h9M813.5 81.5v6"/><rect x="816.5" y="77.5" width="8" height="3.5"/></g><g fill="#b9cfe8"><rect x="818" y="78.5" width="2.5" height="1.6"/><rect x="821.5" y="78.5" width="2.5" height="1.6"/></g><path d="M810.5 79.2h5.5M813 76.8l-2.5 2.4 2.5 2.4" fill="none" stroke="#3c78c3" stroke-width="1.4"/><g fill="none" stroke="#6e6e6e"><path d="M809.5 95.5h9v4h-9zM813.5 95.5v4"/><path d="M809.5 104.5h9v6h-9zM809.5 107.5h9M813.5 104.5v6"/><rect x="812.5" y="100.5" width="5.5" height="3.5"/></g><rect x="813.5" y="101.5" width="3.5" height="1.6" fill="#b9cfe8"/><path d="M819 99.5l6.5 7M825.5 99.5l-6.5 7" stroke="#e8603c" stroke-width="1.5"/><path d="M810 119.5h14" stroke="#3c78c3" stroke-width="1.2"/><path d="M809.5 118v3M824.5 118v3" stroke="#3c78c3"/><path d="M811.5 118l-1.5 1.5 1.5 1.5M822.5 118l1.5 1.5-1.5 1.5" fill="none" stroke="#3c78c3"/><g fill="none" stroke="#6e6e6e"><rect x="809.5" y="122.5" width="14" height="9"/><path d="M809.5 125.5h14M809.5 128.5h14M813 122.5v9M817 122.5v9M820.5 122.5v9M810.5 131.5v2h5v-2M816.5 131.5v2h5v-2"/></g><rect x="812.5" y="125" width="5" height="4" fill="#3c78c3"/><path d="M862 79.5h5l-2.5 3.0z" fill="#555"/><path d="M862 101.5h5l-2.5 3.0z" fill="#555"/><path d="M856 125h5l-2.5 3.0z" fill="#555"/><path d="M906 74H892.5L899.5 79.7L892.5 85.5H906" fill="none" stroke="#444" stroke-width="2.2" stroke-linejoin="miter"/><path d="M913 79h5l-2.5 3.0z" fill="#555"/><rect x="892.5" y="95.5" width="13" height="15" fill="#fcfcfc" stroke="#777"/><rect x="892" y="95" width="14" height="3" fill="#777"/><path d="M899 100v7M896 104l3 3 3-3" fill="none" stroke="#3c78c3" stroke-width="1.8"/><path d="M911 102h5l-2.5 3.0z" fill="#555"/><path d="M892 127 L901 119 L905 123 L896 131z" fill="#e8808f"/><path d="M894 125 L898 129" stroke="#fcfcfc" stroke-width="1"/><path d="M911 125h5l-2.5 3.0z" fill="#555"/><text x="939.3" y="86.7" font-family="Liberation Sans" font-weight="bold" font-size="16.5" fill="#3f78bb">A</text><text x="940.5" y="100.6" font-family="Liberation Sans" font-weight="bold" font-size="16" fill="#915cb8">Z</text><path d="M952 82h17l-6.5 7v8h-4v-8z" fill="#777"/><path d="M954 83.5l5 5.5" stroke="#fcfcfc" stroke-width="1"/><path d="M959.8 89.5v6" stroke="#fcfcfc" stroke-width="1.2"/><path d="M955.5 127h5l-2.5 3.0z" fill="#555"/><circle cx="1023.2" cy="83.6" r="8.9" fill="none" stroke="#4a7fc0" stroke-width="2"/><path d="M1016.6 90.4 L1008.4 98.6" stroke="#4a7fc0" stroke-width="3.2" stroke-linecap="round"/><path d="M1019.5 127h5l-2.5 3.0z" fill="#555"/><path d="M1134 155l4-4 4 4" fill="none" stroke="#555" stroke-width="1.8"/><path d="M102 181.5h-7l3.5 3.5z" fill="#777"/><g fill="#999"><rect x="123.5" y="180" width="1.5" height="1.5"/><rect x="123.5" y="184" width="1.5" height="1.5"/><rect x="123.5" y="188" width="1.5" height="1.5"/></g><path d="M153 178.5l10 10M163 178.5l-10 10" stroke="#c6c6c6" stroke-width="1.4"/><path d="M188.5 184.5l4 4.5 8.5-8.5" fill="none" stroke="#c6c6c6" stroke-width="2"/><path d="M1136 182.5l4 4 4-4" fill="none" stroke="#555" stroke-width="1.6"/><path d="M17 224 L27 224 L27 214 Z" fill="#b5b5b5"/><path d="M1139 219.5h7l-3.5-3.5z" fill="#666"/><path d="M1139 651h7l-3.5 3.5z" fill="#666"/><path d="M713.5 673.5l3.5-3.5v7z" fill="#666"/><path d="M1129.5 673.5l-3.5-3.5v7z" fill="#666"/><path d="M29 672l4-3.5v7z" fill="#bcbcbc"/><path d="M61 672l-4-3.5v7z" fill="#bcbcbc"/><circle cx="212" cy="673" r="7.5" fill="none" stroke="#666" stroke-width="1.1"/><path d="M208 673h8M212 669v8" stroke="#666" stroke-width="1.8"/><g fill="#999"><rect x="692.5" y="668" width="1.5" height="1.5"/><rect x="692.5" y="672" width="1.5" height="1.5"/><rect x="692.5" y="676" width="1.5" height="1.5"/></g><g fill="none" stroke="#5a5a5a" stroke-width="1.3"><rect x="863.6" y="691.6" width="12" height="12"/><path d="M863.6 695.6h12M863.6 699.6h12M867.6 691.6v12M871.6 691.6v12"/></g><rect x="901.5" y="691.5" width="13" height="12" fill="none" stroke="#555"/><rect x="904.5" y="693.5" width="7" height="8" fill="none" stroke="#555"/><path d="M906 696h4M906 698h4M906 700h4" stroke="#555"/><rect x="939.5" y="691.5" width="13" height="12" fill="none" stroke="#555"/><path d="M943.5 691.5v6.5h4.5v-6.5M939.5 698.5h8.5" fill="none" stroke="#555"/><path d="M970 698.5h6" stroke="#555" stroke-width="1.6"/><path d="M980 698.5h100" stroke="#999"/><rect x="1028" y="692" width="5" height="11" fill="#666"/><path d="M1083.5 698h7M1087 694.5v7" stroke="#555" stroke-width="1.7"/><path d="M232.8 179.6 Q231 178.2 229.8 180.6 L227.6 188.6 Q226.6 191.4 224.6 190.2" fill="none" stroke="#666" stroke-width="1.5"/><path d="M227.2 183h4.3" stroke="#666" stroke-width="1.2"/><path d="M229.6 185 Q231.6 184 232.6 186.5 Q233.6 189 235.8 188.2M235.6 184.6 Q233 186 230 189" fill="none" stroke="#666" stroke-width="1.2"/></svg></body></html>
